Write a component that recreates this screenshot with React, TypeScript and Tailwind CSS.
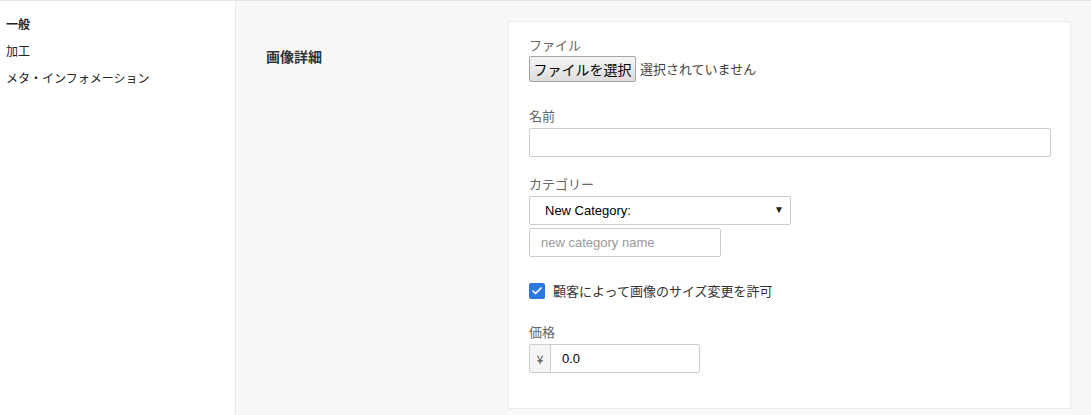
import { Check } from "lucide-react";

const jp = "font-['Noto_Sans_CJK_JP','Noto_Sans',sans-serif]";
const latin = "font-['Liberation_Sans','Noto_Sans_CJK_JP',sans-serif]";

const sideItems = [
  { label: "一般", active: true },
  { label: "加工", active: false },
  { label: "メタ・インフォメーション", active: false },
];

function FieldLabel({ children }: { children: string }) {
  return <div className={`h-[18px] text-[13px] leading-[18px] text-[#666] ${jp}`}>{children}</div>;
}

export default function App() {
  return (
    <div className={`flex h-[415px] w-full overflow-hidden border-t border-[#e6e6e6] bg-white ${jp}`}>
      <aside className="w-[236px] shrink-0 border-r border-[#e8e8e8] bg-white pt-[9px] pl-[6px]">
        {sideItems.map((item) => (
          <div
            key={item.label}
            className={`h-[27px] text-[12px] leading-[27px] text-[#222] ${item.active ? "font-bold" : ""}`}
          >
            {item.label}
          </div>
        ))}
      </aside>

      <main className="flex flex-1 bg-[#f8f8f8] pt-[20px] pr-[20px] pl-[30px]">
        <h2 className="mt-[25px] w-[242px] shrink-0 text-[14px] leading-[20px] font-bold text-[#333]">画像詳細</h2>

        <section className="flex-1 self-start border border-[#ececec] bg-white pt-[14px] pr-[19px] pb-[35px] pl-[20px]">
          <FieldLabel>ファイル</FieldLabel>
          <div className="mt-[2px] flex items-center">
            <button
              type="button"
              className="h-[26px] w-[107px] rounded-[2px] border border-[#a6a6a6] bg-gradient-to-b from-[#f6f6f6] to-[#dddddd] text-[14px] leading-[24px] text-black"
            >
              ファイルを選択
            </button>
            <span className="ml-[4px] text-[13px] text-[#444]">選択されていません</span>
          </div>

          <div className="mt-[25px]">
            <FieldLabel>名前</FieldLabel>
            <input
              type="text"
              className="mt-[3px] block h-[29px] w-full rounded-[2px] border border-[#cccccc] bg-white px-[10px] text-[13px] outline-none"
            />
          </div>

          <div className="mt-[18px]">
            <FieldLabel>カテゴリー</FieldLabel>
            <div
              className={`relative mt-[3px] flex h-[29px] w-[262px] items-center rounded-[2px] border border-[#cccccc] bg-white pl-[15px] text-[13px] text-black ${latin}`}
            >
              New Category:
              <span className="absolute top-[6px] right-[6px] text-[10px] leading-[14px] text-[#222]">▼</span>
            </div>
            <div
              className={`mt-[3px] flex h-[29px] w-[192px] items-center rounded-[2px] border border-[#cccccc] bg-white pl-[11px] text-[13px] text-[#999] ${latin}`}
            >
              new category name
            </div>
          </div>

          <label className="mt-[25px] flex h-[18px] items-center">
            <span className="flex h-[16px] w-[16px] items-center justify-center rounded-[2px] bg-[#2a7ae2]">
              <Check className="h-[12px] w-[12px] text-white" strokeWidth={3.5} />
            </span>
            <span className="ml-[8px] text-[13px] leading-[18px] text-[#333]">顧客によって画像のサイズ変更を許可</span>
          </label>

          <div className="mt-[23px]">
            <FieldLabel>価格</FieldLabel>
            <div className="mt-[3px] flex h-[29px] w-[171px] rounded-[2px] border border-[#cccccc] bg-white">
              <span className="flex w-[21px] items-center justify-center border-r border-[#cccccc] bg-[#f5f5f5] text-[12px] text-[#555]">
                ¥
              </span>
              <span className={`flex items-center pl-[11px] text-[13px] text-black ${latin}`}>0.0</span>
            </div>
          </div>
        </section>
      </main>
    </div>
  );
}
